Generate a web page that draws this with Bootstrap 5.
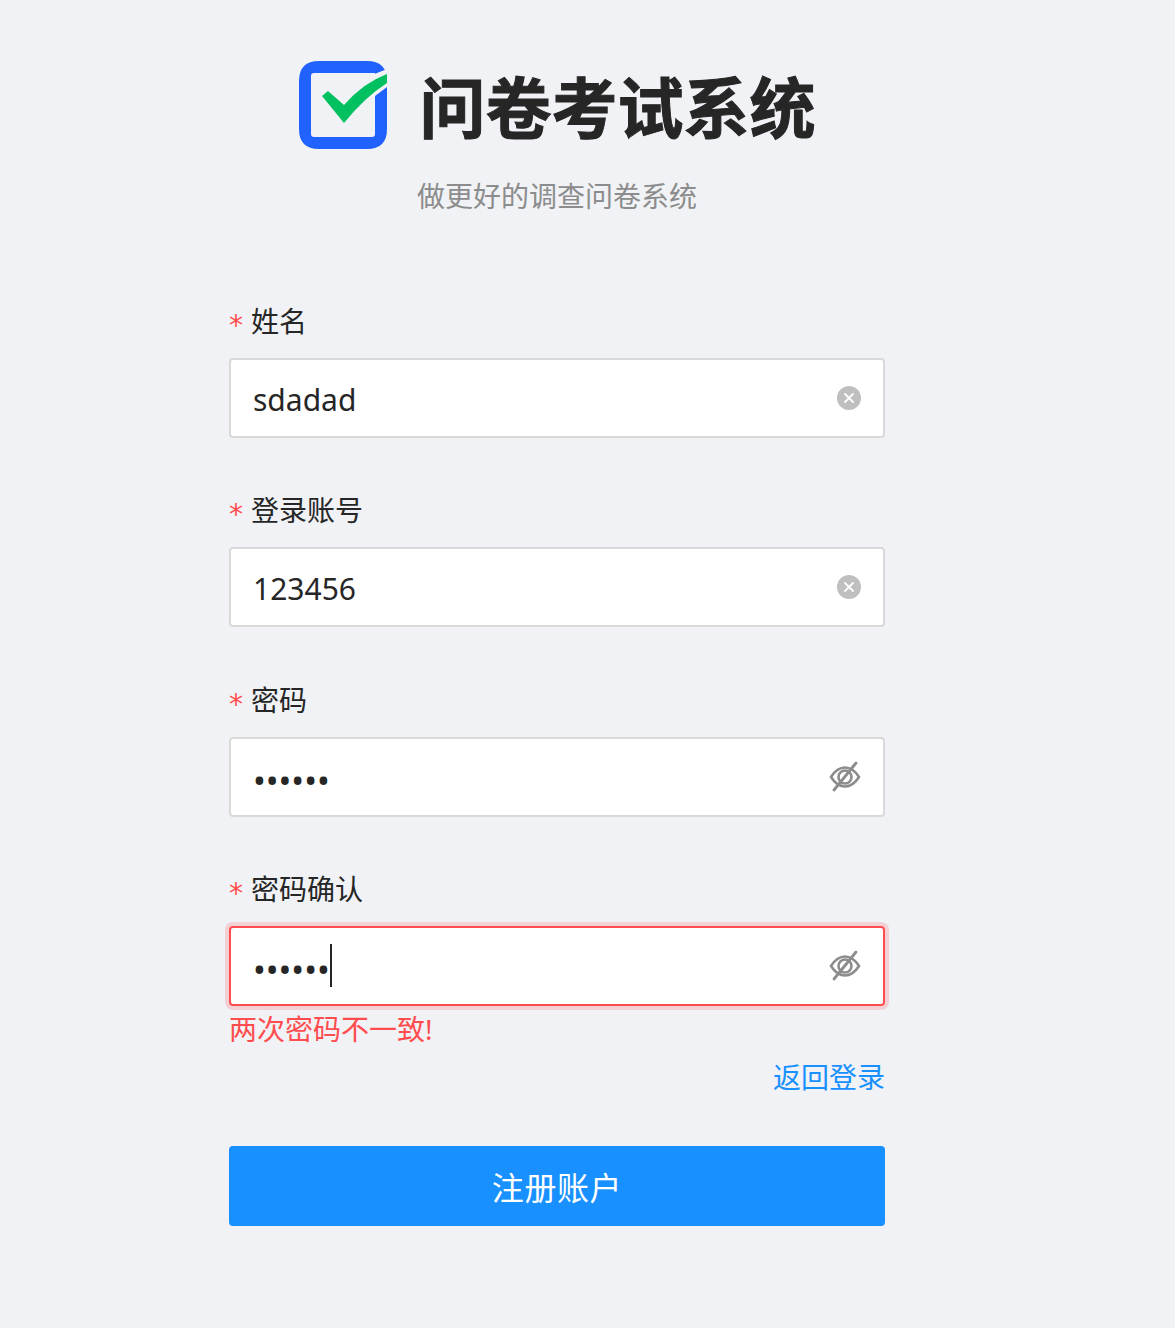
<!DOCTYPE html>
<html lang="zh-CN">
<head>
<meta charset="utf-8">
<title>问卷考试系统</title>
<link rel="stylesheet" href="https://cdn.jsdelivr.net/npm/bootstrap@5.3.0/dist/css/bootstrap.min.css">
<style>
html,body{height:100%}
body{background:#f0f2f5;font-family:"Noto Sans","Noto Sans CJK SC",sans-serif;color:#262626;min-height:1328px}
.reg-wrap{width:656px;margin-left:229px;padding-top:61px}
.brand-row{height:88px;gap:33px}
.brand-logo{width:88px;height:88px;flex:none}
.brand-name{font-size:66px;font-weight:700;line-height:88px;margin:0;color:#262626;padding-top:4px;-webkit-text-stroke:1px #262626}
.brand-sub{font-size:28px;line-height:40px;color:#8c8c8c;text-align:center;margin-top:27px;margin-bottom:0}
.reg-form{margin-top:85px}
.fld{margin-bottom:52.33px}
.fld-tight{margin-bottom:0}
.fld-label{font-size:28px;line-height:40px;color:#262626;margin-bottom:17px;display:block;height:40px}
.req{color:#ff4d4f;font-family:"DejaVu Sans",sans-serif;font-weight:400;margin-right:8px;font-size:28px;line-height:1;display:inline-block;width:14px;vertical-align:-3px;overflow:visible}
.fld-box{height:80px}
.fld-input.form-control{height:80px;border:2px solid #d9d9d9;border-radius:4px;font-size:30px;padding:2px 70px 0 22px;color:#262626;background:#fff;box-shadow:none}
.fld-input.pw.form-control{font-size:34px;padding-top:6px}
.fld-input.bad.form-control{border-color:#ff4d4f;box-shadow:0 0 0 4px rgba(255,77,79,.2)}
.fld-icon{position:absolute;top:50%;transform:translateY(-50%);display:block}
.ic-clear{right:24px;width:24px;height:24px}
.ic-eye{right:24px;width:32px;height:32px}
.fake-caret{position:absolute;left:101px;top:18px;width:2px;height:43px;background:#262626}
.err-msg{font-size:28px;line-height:44px;color:#ff4d4f;margin:1px 0 0}
.back-row{text-align:right;font-size:28px;line-height:44px;margin-top:4px}
.back-link{color:#1890ff;text-decoration:none}
.submit-btn.btn{display:block;width:100%;height:80px;margin-top:47px;background:#1890ff;border:0;border-radius:4px;color:#fff;font-size:32px;line-height:80px;padding:2px 0 0;letter-spacing:.6px}
</style>
</head>
<body>
<div class="reg-wrap">
  <div class="d-flex justify-content-center align-items-center brand-row">
    <svg class="brand-logo" viewBox="0 0 88 88" aria-hidden="true">
      <path fill="#2162ff" d="M20 0H68Q88 0 88 20V68Q88 88 68 88H20Q0 88 0 68V20Q0 0 20 0ZM15 12Q12 12 12 15V73Q12 76 15 76H73Q76 76 76 73V33L76 12Z"/>
      <path fill="#f0f2f5" d="M73 14L88 8V26L76 35V30L60 14Z"/>
      <path fill="#00c060" d="M23 35L29 30L45 44Q64 22 88 13V22Q66 36 45 62Z"/>
    </svg>
    <h1 class="brand-name">问卷考试系统</h1>
  </div>
  <p class="brand-sub">做更好的调查问卷系统</p>
  <form class="reg-form" onsubmit="return false">
    <div class="fld">
      <label class="fld-label"><span class="req">*</span>姓名</label>
      <div class="position-relative fld-box">
        <input class="form-control fld-input" type="text" value="sdadad">
        <svg class="fld-icon ic-clear" viewBox="0 0 24 24"><circle cx="12" cy="12" r="12" fill="#bfbfbf"/><path d="M8 8L16 16M16 8L8 16" stroke="#fff" stroke-width="1.8" stroke-linecap="round"/></svg>
      </div>
    </div>
    <div class="fld">
      <label class="fld-label"><span class="req">*</span>登录账号</label>
      <div class="position-relative fld-box">
        <input class="form-control fld-input" type="text" value="123456">
        <svg class="fld-icon ic-clear" viewBox="0 0 24 24"><circle cx="12" cy="12" r="12" fill="#bfbfbf"/><path d="M8 8L16 16M16 8L8 16" stroke="#fff" stroke-width="1.8" stroke-linecap="round"/></svg>
      </div>
    </div>
    <div class="fld">
      <label class="fld-label"><span class="req">*</span>密码</label>
      <div class="position-relative fld-box">
        <input class="form-control fld-input pw" type="password" value="123456">
        <svg class="fld-icon ic-eye" viewBox="0 0 32 32" fill="none" stroke="#8c8c8c" stroke-width="2.6"><path d="M2 16Q8 6.5 16 6.5T30 16Q24 25.5 16 25.5T2 16Z"/><circle cx="16" cy="16" r="6.5"/><path d="M27 2L5 29" stroke-width="2.8" stroke-linecap="round"/></svg>
      </div>
    </div>
    <div class="fld fld-tight">
      <label class="fld-label"><span class="req">*</span>密码确认</label>
      <div class="position-relative fld-box">
        <input class="form-control fld-input pw bad" type="password" value="123456">
        <span class="fake-caret"></span>
        <svg class="fld-icon ic-eye" viewBox="0 0 32 32" fill="none" stroke="#8c8c8c" stroke-width="2.6"><path d="M2 16Q8 6.5 16 6.5T30 16Q24 25.5 16 25.5T2 16Z"/><circle cx="16" cy="16" r="6.5"/><path d="M27 2L5 29" stroke-width="2.8" stroke-linecap="round"/></svg>
      </div>
      <div class="err-msg">两次密码不一致!</div>
    </div>
    <div class="back-row"><a class="back-link" href="#">返回登录</a></div>
    <button class="btn btn-primary submit-btn" type="submit">注册账户</button>
  </form>
</div>
<script src="https://cdn.jsdelivr.net/npm/bootstrap@5.3.0/dist/js/bootstrap.bundle.min.js"></script>
</body>
</html>
